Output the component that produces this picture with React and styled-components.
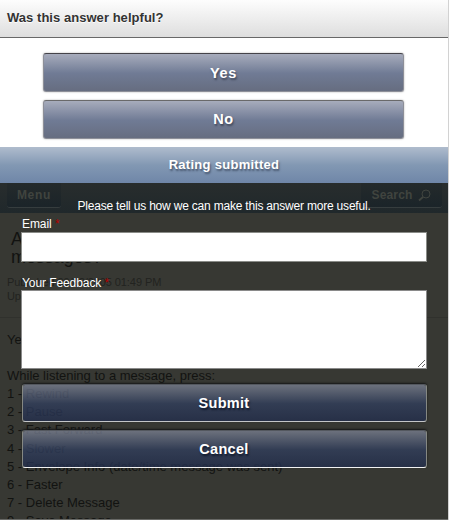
import React from "react";
import styled, { createGlobalStyle } from "styled-components";

const GlobalStyle = createGlobalStyle`
  * { box-sizing: border-box; }
  body { margin: 0; background: #fff; font-family: "Liberation Sans", Arial, sans-serif; overflow: hidden; }
`;

const Page = styled.div`
  width: 449px;
  height: 520px;
  border-right: 1px solid #d2d2d2;
  background: #fff;
  overflow: hidden;
`;

const Header = styled.header`
  height: 38px;
  padding: 0 7px;
  border-bottom: 1px solid #686868;
  background: linear-gradient(#fdfdfd, #dedede);
  color: #333;
  font-size: 13px;
  font-weight: bold;
  line-height: 35px;
  letter-spacing: 0.04px;
  text-shadow: 0 1px 1px #fff;
`;

const Ratings = styled.div`
  display: flex;
  flex-direction: column;
  gap: 8px;
  height: 109px;
  padding: 15px 44px 0 43px;
`;

const RatingButton = styled.button`
  height: 39px;
  padding: ${({ $first }) => ($first ? "1px 0 0" : "0 0 1px")};
  border: 1px solid #8d8f98;
  border-top: 1px solid ${({ $first }) => ($first ? "#444349" : "#69696a")};
  border-radius: 3px;
  background: linear-gradient(#a7acbc, #707b95 52%, #666d80);
  box-shadow: 0 0 2px #aaa;
  color: #fff;
  font: bold 14.5px "Liberation Sans", Arial, sans-serif;
  letter-spacing: 0.6px;
  text-shadow: 1px 2px 2px #404759;
`;

const Notice = styled.div`
  height: 36px;
  background: linear-gradient(#afbccd, #8298b3 50%, #6f86a8);
  color: #fff;
  font-size: 13px;
  font-weight: bold;
  line-height: 35px;
  letter-spacing: 0.28px;
  text-align: center;
  text-shadow: 1px 2px 2px #44536b;
`;

const Stage = styled.main`
  display: grid;
  height: 337px;
  border-bottom: 1px solid #686966;
  background: #373833;
  overflow: hidden;
`;

const Article = styled.article`
  grid-area: 1 / 1;
  min-width: 0;
  height: 336px;
  overflow: hidden;
  color: #121311;
`;

const Toolbar = styled.div`
  display: flex;
  justify-content: space-between;
  height: 30px;
  padding: 0 6px 5px 7px;
  background: linear-gradient(#282d2d, #20282b);
`;

const ToolButton = styled.div`
  display: flex;
  align-items: center;
  justify-content: center;
  gap: 6px;
  width: ${({ $width }) => $width}px;
  border-bottom: 1px solid #363d3e;
  border-radius: 0 0 3px 3px;
  background: linear-gradient(#242a2b, #1b2429);
  color: #40443f;
  font-size: 12px;
  font-weight: bold;
  letter-spacing: ${({ $spacing }) => $spacing}px;
`;

const Title = styled.h1`
  height: 46px;
  margin: 0;
  padding: 17px 11px 0;
  font-size: 18px;
  font-weight: normal;
  line-height: 18px;
  letter-spacing: -0.1px;
`;

const Meta = styled.div`
  height: 59px;
  padding: 16px 7px 0;
  border-bottom: 1px solid #30312d;
  color: #222320;
  font-size: 11px;
  line-height: 14px;
  letter-spacing: -0.08px;
`;

const Copy = styled.div`
  padding: 13px 7px 0;
  font-size: 13px;
  line-height: 18.1px;
  white-space: pre;
`;

const Form = styled.form`
  grid-area: 1 / 1;
  z-index: 1;
  display: flex;
  flex-direction: column;
  width: 406px;
  margin-left: 21px;
  padding-top: 15px;
`;

const Prompt = styled.p`
  height: 19px;
  margin: 0;
  color: #fff;
  font-size: 12px;
  line-height: 17px;
  text-align: center;
  letter-spacing: -0.2px;
`;

const Label = styled.label`
  height: 15px;
  padding-left: 1px;
  color: #fff;
  font-size: 12px;
  line-height: ${({ $line }) => $line}px;
  letter-spacing: -0.08px;
`;

const Required = styled.span`
  color: #b30000;
`;

const Input = styled.input`
  height: 30px;
  margin: 0 0 13px;
  border: 1px solid #8a8c88;
  background: #fff;
`;

const Feedback = styled.textarea`
  height: 79px;
  margin: 0 0 15px;
  border: 1px solid #8a8a8a;
  background: #fff;
  resize: vertical;
`;

const ActionButton = styled.button`
  height: 38px;
  margin: 0 0 8px 1px;
  padding: 0 1px 1px 0;
  border: 1px solid #858883;
  border-top-color: #54585f;
  border-bottom-color: ${({ $edge }) => $edge};
  border-radius: 3px;
  background: linear-gradient(rgba(121, 127, 143, 0.8), rgba(49, 62, 92, 0.8) 52%, rgba(35, 46, 76, 0.8));
  background-clip: padding-box;
  box-shadow: 0 -1px 2px #171819;
  color: #fff;
  font: bold 14.5px "Liberation Sans", Arial, sans-serif;
  letter-spacing: 0.3px;
  text-shadow: 1px 2px 2px #10192c;
`;

const SearchIcon = () => (
  <svg width="13" height="13" viewBox="0 0 13 13" fill="none" stroke="currentColor">
    <circle cx="8" cy="5" r="4" />
    <path d="M5 8 1 11.5" strokeWidth="1.7" />
  </svg>
);

const steps = [
  "Rewind",
  "Pause",
  "Fast Forward",
  "Slower",
  "Envelope Info (date/time message was sent)",
  "Faster",
  "Delete Message",
];

export default function App() {
  return (
    <Page>
      <GlobalStyle />
      <Header>Was this answer helpful?</Header>
      <Ratings>
        <RatingButton $first>Yes</RatingButton>
        <RatingButton>No</RatingButton>
      </Ratings>
      <Notice>Rating submitted</Notice>
      <Stage>
        <Article>
          <Toolbar>
            <ToolButton $width={54} $spacing={0.7}>Menu</ToolButton>
            <ToolButton $width={81} $spacing={0.15}>Search <SearchIcon /></ToolButton>
          </Toolbar>
          <Title>A<br />messages?</Title>
          <Meta>Published 09/02/2005 01:49 PM<br />Updated</Meta>
          <Copy>
            <div>Yes</div>
            <div> </div>
            <div>While listening to a message, press:</div>
            {steps.map((step, index) => <div key={step}>{index + 1} - {step}</div>)}
            <div>9 - Save Message</div>
          </Copy>
        </Article>
        <Form onSubmit={(event) => event.preventDefault()}>
          <Prompt>Please tell us how we can make this answer more useful.</Prompt>
          <Label $line={15} htmlFor="email">Email <Required>*</Required></Label>
          <Input id="email" />
          <Label $line={17} htmlFor="feedback">Your Feedback <Required>*</Required></Label>
          <Feedback id="feedback" />
          <ActionButton type="submit" $edge="#c4c6c8">Submit</ActionButton>
          <ActionButton type="button" $edge="#f2f2f2">Cancel</ActionButton>
        </Form>
      </Stage>
    </Page>
  );
}
